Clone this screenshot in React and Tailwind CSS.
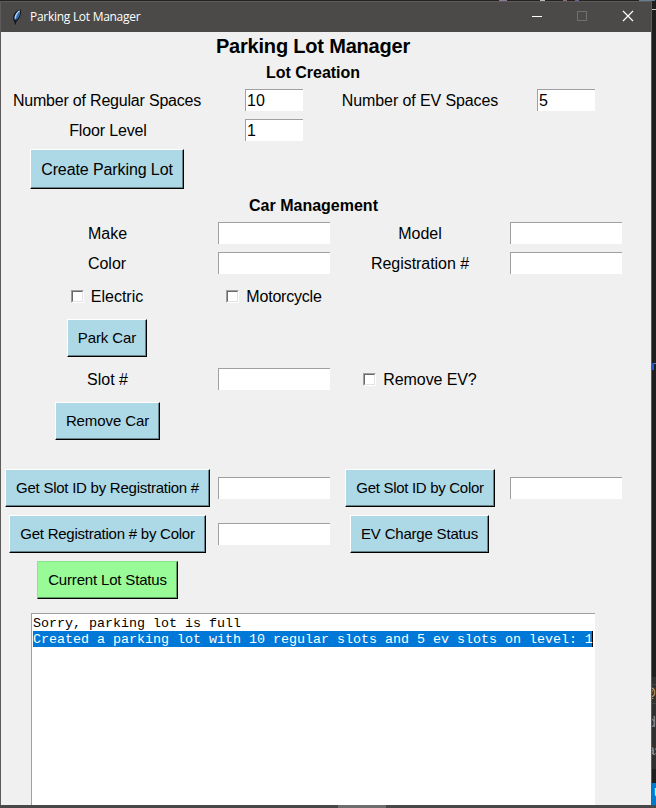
import React from "react";

const cols = "grid grid-cols-[212px_122px_170px_122px] items-center justify-items-center";

function Row({ h, children }) {
  return <div className={`${cols} ${h}`}>{children}</div>;
}

function Label({ children, className = "" }) {
  return <span className={`whitespace-nowrap pt-[2px] text-[16px] leading-[18px] ${className}`}>{children}</span>;
}

function Entry({ value = "", narrow = false }) {
  return (
    <div
      className={`h-[22px] border-t border-l border-[#a0a0a0] bg-white pl-px text-[16px] leading-[21px] ${narrow ? "w-[58px]" : "w-[112px]"}`}
    >
      {value}
    </div>
  );
}

function Button({ children, className = "w-20", big = false, green = false }) {
  return (
    <button
      className={`flex items-center justify-center border whitespace-nowrap border-r-black border-b-black ${
        green
          ? "border-t-[#8ae68a] border-l-[#8ae68a] bg-[#98fb98] shadow-[inset_-1px_-1px_0_#5f9e5f]"
          : "border-t-white border-l-white bg-[#add8e6] shadow-[inset_-1px_-1px_0_#66828b]"
      } ${big ? "h-10 pt-[2px] text-[16px]" : "h-[38px] text-[15px]"} ${className}`}
    >
      {children}
    </button>
  );
}

function Check({ children, className = "" }) {
  return (
    <div className={`flex items-center gap-[7px] ${className}`}>
      <div className="size-[13px] border border-t-[#a0a0a0] border-l-[#a0a0a0] border-r-white border-b-white">
        <div className="size-[11px] border border-t-[#696969] border-l-[#696969] border-r-[#e3e3e3] border-b-[#e3e3e3] bg-white" />
      </div>
      <Label>{children}</Label>
    </div>
  );
}

function Feather() {
  return (
    <svg width="16" height="16" viewBox="0 0 16 16">
      <path d="M5.800 15.500L5.600 13C4.200 11.500 3.800 9 4.500 6.500C5.500 3.500 8 1 11.500 .5C12.800 3.500 11.500 8.500 8 12L7 13.500L6.800 15.500Z" fill="#101418" />
      <path d="M5.500 10.500C5 6.500 7.500 2.800 11 1.500C11.500 4.500 10.300 8 7.300 11Z" fill="#4d8edc" />
      <path d="M10.600 1.800C8 3.500 6.500 6 6.100 9.500" fill="none" stroke="#b5d6fa" strokeWidth="1.100" />
      <path d="M10.300 3.500L6.500 12" stroke="#16365c" strokeWidth=".6" />
    </svg>
  );
}

function TitleBar() {
  return (
    <div className="flex h-[31px] items-center border-t border-[#5c5b59] bg-[#4c4a48] text-white">
      <div className="flex flex-1 items-center gap-[5px] pl-2">
        <Feather />
        <span className="whitespace-nowrap font-['Open_Sans','Noto_Sans',sans-serif] text-[12px] leading-4 tracking-[-0.28px]">
          Parking Lot Manager
        </span>
      </div>
      <svg width="138" height="30" viewBox="0 0 138 30" fill="none" shapeRendering="crispEdges">
        <path d="M19 14.500H29" stroke="#fff" />
        <rect x="64.500" y="9.500" width="9" height="9" stroke="#71706e" />
        <path d="M110 9L120 19M120 9L110 19" stroke="#fff" strokeWidth="1.200" shapeRendering="auto" />
      </svg>
    </div>
  );
}

function EditorEdge() {
  return (
    <div className="flex w-1 flex-col overflow-hidden bg-[#1e1e1e] text-[14px] leading-5 text-[#9a9a9a]">
      <div className="mt-[8px] h-px shrink-0 bg-[#cccccc]" />
      <div className="mt-[353px] flex h-[7px] shrink-0">
        <div className="w-[2px] bg-[#2458c8]" />
        <div className="h-px w-[2px] bg-[#5a8ad0]" />
      </div>
      <div className="mt-[307px] h-[92px] shrink-0 bg-[#303031]">
        <div className="mt-[7px] h-[20px] overflow-hidden border-t border-b border-[#454545] text-[#c5ad82]">
          <div className="-mt-[2px] -ml-[10px]">@</div>
        </div>
        <div className="mt-2 -ml-1 h-5 text-[#8590b5]">d</div>
        <div className="mt-2 -ml-[5px] h-5">as</div>
      </div>
      <div className="mt-[14px] flex-1 bg-[#007acc] pl-[2px] text-[12px] text-white">U</div>
    </div>
  );
}

export default function App() {
  return (
    <div className="flex h-[808px] w-[656px] flex-col overflow-hidden bg-[#1e1e1e] font-['Liberation_Sans',Arial,sans-serif] text-black">
      <div className="flex h-px shrink-0 bg-[#242220]">
        <div className="ml-[499px] w-2 bg-[#8b7a9a]" />
        <div className="ml-[33px] w-[5px] bg-[#bbb]" />
        <div className="ml-[18px] w-1 bg-[#946383]" />
        <div className="ml-[8px] w-1 bg-[#765b9e]" />
        <div className="ml-[60px] w-[16px] bg-[#668090]" />
      </div>
      <div className="flex h-[804px] shrink-0">
        <div className="flex w-[652px] flex-col border-r border-l border-[#5c5b59] bg-[#f0f0f0]">
          <TitleBar />
          <div className="flex h-[773px] w-[626px] flex-col">
            <h1 className="h-7 pr-[2px] text-center text-[20px] leading-7 font-bold tracking-[-0.19px]">Parking Lot Manager</h1>
            <h2 className="h-[25px] pr-[2px] text-center text-[16px] leading-[25px] font-bold">Lot Creation</h2>
            <Row h="h-[30px]">
              <Label className="tracking-[-0.2px]">Number of Regular Spaces</Label>
              <Entry value="10" narrow />
              <Label className="tracking-[-0.1px]">Number of EV Spaces</Label>
              <Entry value="5" narrow />
            </Row>
            <Row h="h-[30px]">
              <Label className="pl-[2px] tracking-[-0.15px]">Floor Level</Label>
              <Entry value="1" narrow />
            </Row>
            <Row h="h-12">
              <Button big className="w-[154px] tracking-[-0.1px]">Create Parking Lot</Button>
            </Row>
            <h2 className="h-[25px] pr-px text-center text-[16px] leading-[25px] font-bold">Car Management</h2>
            <Row h="h-[30px]">
              <Label className="pl-px">Make</Label>
              <Entry />
              <Label>Model</Label>
              <Entry />
            </Row>
            <Row h="h-[30px]">
              <Label>Color</Label>
              <Entry />
              <Label className="tracking-[-0.05px]">Registration #</Label>
              <Entry />
            </Row>
            <Row h="h-9">
              <Check>Electric</Check>
              <Check className="tracking-[-0.2px]">Motorcycle</Check>
            </Row>
            <Row h="h-12">
              <Button className="w-20 tracking-[-0.1px]">Park Car</Button>
            </Row>
            <Row h="h-[34px]">
              <Label className="pl-px">Slot #</Label>
              <Entry />
              <Check className="tracking-[-0.1px]">Remove EV?</Check>
            </Row>
            <Row h="h-[50px]">
              <Button className="w-[105px] pl-px tracking-[-0.1px]">Remove Car</Button>
            </Row>
            <div className="mt-[19px]" />
            <Row h="h-[46px]">
              <Button className="w-[205px] pl-px tracking-[-0.25px]">Get Slot ID by Registration #</Button>
              <Entry />
              <Button className="w-[150px] tracking-[-0.3px]">Get Slot ID by Color</Button>
              <Entry />
            </Row>
            <Row h="h-[46px]">
              <Button className="w-[197px] pl-px tracking-[-0.24px]">Get Registration # by Color</Button>
              <Entry />
              <Button className="mr-px w-[139px] tracking-[-0.2px]">EV Charge Status</Button>
            </Row>
            <Row h="h-[46px]">
              <Button green className="w-[141px] pl-px tracking-[-0.17px]">Current Lot Status</Button>
            </Row>
            <div className="mt-[10px] ml-[30px] w-[564px] flex-1 border-t border-l border-[#a0a0a0] bg-white pt-px pl-px font-['Liberation_Mono','Courier_New',monospace] text-[13.333px] leading-4 whitespace-pre">
              <div className="h-4 leading-[18px]">Sorry, parking lot is full</div>
              <div className="h-4 w-[560px] border-r border-black bg-[#0078d7] leading-[18px] text-white">
                Created a parking lot with 10 regular slots and 5 ev slots on level: 1
              </div>
            </div>
          </div>
        </div>
        <EditorEdge />
      </div>
      <div className="flex h-[3px] shrink-0 bg-[#484848]">
        <div className="ml-[338px] w-12 bg-[#6e6e6e]" />
      </div>
    </div>
  );
}
